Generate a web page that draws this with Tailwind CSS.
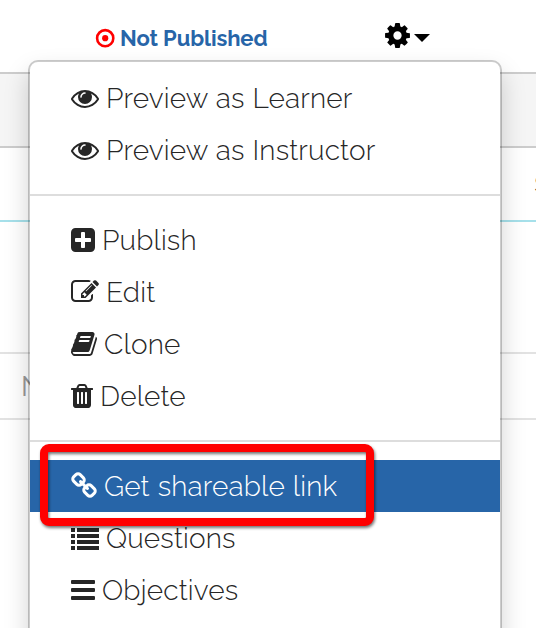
<!DOCTYPE html>
<html lang="en">
<head>
    <meta charset="UTF-8">
    <meta name="viewport" content="width=device-width, initial-scale=1.0">
    <title>Module menu</title>
    <script src="https://cdn.jsdelivr.net/npm/@tailwindcss/browser@4"></script>
</head>
<body class="relative w-[536px] h-[628px] overflow-hidden bg-white font-[Raleway,Lato,sans-serif] text-[#262626]">

    <!-- Page behind the menu -->
    <header class="flex items-center h-[72px] pt-1 pl-[95px]">
        <svg class="w-5 h-5 shrink-0" viewBox="0 0 20 20">
            <circle cx="10.2" cy="10.2" r="8.1" fill="none" stroke="#f00" stroke-width="2.6"/>
            <circle cx="10.2" cy="10.2" r="3.1" fill="#f00"/>
        </svg>
        <span class="w-[270px] pl-[5px] text-[22px] leading-7 font-bold tracking-[-0.1px] text-[#2765a8]">Not Published</span>
        <svg class="w-[29px] h-[29px] -mt-[5px] -ml-[2px] shrink-0" viewBox="0 0 1792 1792" fill="#000"><path d="M1152 896q0-106-75-181t-181-75-181 75-75 181 75 181 181 75 181-75 75-181zm512-109v222q0 12-8 23t-20 13l-185 28q-19 54-39 91 35 50 107 138 10 12 10 25t-9 23q-27 37-99 108t-94 71q-12 0-26-9l-138-108q-44 23-91 38-16 136-29 186-7 28-36 28h-222q-14 0-24.5-8.5t-11.5-21.5l-28-184q-49-16-90-37l-141 107q-10 9-25 9-14 0-25-11-126-114-165-168-7-10-7-23 0-12 8-23 15-21 51-66.5t54-70.5q-27-50-41-99l-183-27q-13-2-21-12.5t-8-23.5v-222q0-12 8-23t19-13l186-28q14-46 39-92-40-57-107-138-10-12-10-24 0-10 9-23 26-36 98.5-107.5t94.5-71.5q13 0 26 10l138 107q44-23 91-38 16-136 29-186 7-28 36-28h222q14 0 24.5 8.5t11.5 21.5l28 184q49 16 90 37l142-107q9-9 24-9 13 0 25 10 129 119 165 170 7 8 7 22 0 12-8 23-15 21-51 66.5t-54 70.5q26 50 41 98l183 28q13 2 21 12.5t8 23.5z"/></svg>
        <svg class="w-4 h-2 ml-[2px] -mt-[1px] shrink-0" viewBox="0 0 16 8" fill="#000"><path d="M0 0h16l-8 8z"/></svg>
    </header>
    <div class="h-[76px] bg-[#f5f5f5] border-y-2 border-[#ccc]"></div>
    <div class="h-[74px] border-b-2 border-[#a6e0ea] pt-[18px] pl-[534.5px] text-[22px] leading-9 font-normal whitespace-nowrap">S</div>
    <div class="h-[132px] border-b-2 border-[#e2e2e2]"></div>
    <div class="h-[66px] border-b-2 border-[#e2e2e2] pl-[21px] pt-px text-[28px] leading-[64px] font-normal text-[#999]">Name</div>

    <!-- Dropdown menu -->
    <div class="absolute left-[28px] top-[60px] w-[474px] h-[640px] pt-[10px] rounded-[10px] bg-white border-2 border-black/20 bg-clip-padding shadow-[0_12px_24px_rgba(0,0,0,0.175)] text-[28px] leading-[52px] font-light tracking-[0.17px] [word-spacing:0.6px] whitespace-nowrap">
        <a class="flex items-center h-[52px] pl-[41px] gap-[7px]">
            <svg class="w-7 h-7" viewBox="0 0 1792 1792" fill="currentColor"><path d="M1664 960q-152-236-381-353 61 104 61 225 0 185-131.5 316.5t-316.5 131.5-316.5-131.5-131.5-316.5q0-121 61-225-229 117-381 353 133 205 333.5 326.5t434.5 121.5 434.5-121.5 333.5-326.5zm-720-384q0-20-14-34t-34-14q-125 0-214.5 89.5t-89.5 214.5q0 20 14 34t34 14 34-14 14-34q0-86 61-147t147-61q20 0 34-14t14-34zm848 384q0 34-20 69-140 230-376.5 368.5t-499.5 138.5-499.5-139-376.5-368q-20-35-20-69t20-69q140-229 376.5-368t499.5-139 499.5 139 376.5 368q20 35 20 69z"/></svg>
            <span class="pt-[2px]">Preview as Learner</span>
        </a>
        <a class="flex items-center h-[52px] pl-[41px] gap-[7px]">
            <svg class="w-7 h-7" viewBox="0 0 1792 1792" fill="currentColor"><path d="M1664 960q-152-236-381-353 61 104 61 225 0 185-131.5 316.5t-316.5 131.5-316.5-131.5-131.5-316.5q0-121 61-225-229 117-381 353 133 205 333.5 326.5t434.5 121.5 434.5-121.5 333.5-326.5zm-720-384q0-20-14-34t-34-14q-125 0-214.5 89.5t-89.5 214.5q0 20 14 34t34 14 34-14 14-34q0-86 61-147t147-61q20 0 34-14t14-34zm848 384q0 34-20 69-140 230-376.5 368.5t-499.5 138.5-499.5-139-376.5-368q-20-35-20-69t20-69q140-229 376.5-368t499.5-139 499.5 139 376.5 368q20 35 20 69z"/></svg>
            <span class="pt-[2px]">Preview as Instructor</span>
        </a>
        <div class="h-[2px] my-[18px] bg-[#ddd]"></div>
        <a class="flex items-center h-[52px] pl-[41px] gap-[7px]">
            <svg class="w-6 h-7" viewBox="128 0 1536 1792" fill="currentColor"><path d="M1408 960v-128q0-26-19-45t-45-19h-320v-320q0-26-19-45t-45-19h-128q-26 0-45 19t-19 45v320h-320q-26 0-45 19t-19 45v128q0 26 19 45t45 19h320v320q0 26 19 45t45 19h128q26 0 45-19t19-45v-320h320q26 0 45-19t19-45zm256-544v960q0 119-84.5 203.5t-203.5 84.5h-960q-119 0-203.5-84.5t-84.5-203.5v-960q0-119 84.5-203.5t203.5-84.5h960q119 0 203.5 84.5t84.5 203.5z"/></svg>
            <span class="pt-[2px]">Publish</span>
        </a>
        <a class="flex items-center h-[52px] pl-[41px] gap-[7px]">
            <svg class="w-7 h-7" viewBox="0 0 1792 1792" fill="currentColor"><path d="M888 1184l116-116-152-152-116 116v56h96v96h56zm440-720q-16-16-33 1l-350 350q-17 17-1 33t33-1l350-350q17-17 1-33zm80 594v190q0 119-84.5 203.5t-203.5 84.5h-832q-119 0-203.5-84.5t-84.5-203.5v-832q0-119 84.5-203.5t203.5-84.5h832q63 0 117 25 15 7 18 23 3 17-9 29l-49 49q-14 14-32 8-23-6-45-6h-832q-66 0-113 47t-47 113v832q0 66 47 113t113 47h832q66 0 113-47t47-113v-126q0-13 9-22l64-64q15-15 35-7t20 29zm-96-738l288 288-672 672h-288v-288zm444 132l-92 92-288-288 92-92q28-28 68-28t68 28l152 152q28 28 28 68t-28 68z"/></svg>
            <span class="pt-[2px]">Edit</span>
        </a>
        <a class="flex items-center h-[52px] pl-[41px] gap-[7px]">
            <svg class="w-[26px] h-7" viewBox="64 0 1664 1792" fill="currentColor"><path d="M1703 478q40 57 18 129l-275 906q-19 64-76.5 107.5t-122.5 43.5h-923q-77 0-148.5-53.5t-99.5-131.5q-24-67-2-127 0-4 3-27t4-37q1-8-3-21.5t-3-19.5q2-11 8-21t16.5-23.5 16.5-23.5q23-38 45-91.5t30-91.5q3-10 .5-30t-.5-28q3-11 17-28t17-23q21-36 42-92t25-90q1-9-2.5-32t.5-28q4-13 22-30.5t22-22.5q19-26 42.5-84.5t27.5-96.5q1-8-3-25.5t-2-26.5q2-8 9-18t18-23 17-21q8-12 16.5-30.5t15-35 16-36 19.5-32 26.5-23.5 36-11.5 47.5 5.5l-1 3q38-9 51-9h761q74 0 114 56t18 130l-274 906q-36 119-71.5 153.5t-128.5 34.5h-869q-27 0-38 15-11 16-1 43 24 70 144 70h923q29 0 56-15.5t35-41.5l300-987q7-22 5-57 38 15 59 43zm-1064 2q-4 13 2 22.5t20 9.5h608q13 0 25.5-9.5t16.5-22.5l21-64q4-13-2-22.5t-20-9.5h-608q-13 0-25.5 9.5t-16.5 22.5zm-83 256q-4 13 2 22.5t20 9.5h608q13 0 25.5-9.5t16.5-22.5l21-64q4-13-2-22.5t-20-9.5h-608q-13 0-25.5 9.5t-16.5 22.5z"/></svg>
            <span class="pt-[2px]">Clone</span>
        </a>
        <a class="flex items-center h-[52px] pl-[41px] gap-[7px]">
            <svg class="w-[22px] h-7" viewBox="192 0 1408 1792" fill="currentColor"><path d="M704 1376v-704q0-14-9-23t-23-9h-64q-14 0-23 9t-9 23v704q0 14 9 23t23 9h64q14 0 23-9t9-23zm256 0v-704q0-14-9-23t-23-9h-64q-14 0-23 9t-9 23v704q0 14 9 23t23 9h64q14 0 23-9t9-23zm256 0v-704q0-14-9-23t-23-9h-64q-14 0-23 9t-9 23v704q0 14 9 23t23 9h64q14 0 23-9t9-23zm-544-992h448l-48-117q-7-9-17-11h-317q-10 2-17 11zm928 32v64q0 14-9 23t-23 9h-96v948q0 83-47 143.5t-113 60.5h-832q-66 0-113-58.5t-47-141.5v-952h-96q-14 0-23-9t-9-23v-64q0-14 9-23t23-9h309l70-167q15-37 54-63t79-26h320q40 0 79 26t54 63l70 167h309q14 0 23 9t9 23z"/></svg>
            <span class="pt-[2px]">Delete</span>
        </a>
        <div class="h-[2px] my-[18px] bg-[#ddd]"></div>
        <a class="flex items-center h-[52px] pl-[41px] gap-[7px] bg-[#2765a8] text-white">
            <svg class="w-[26px] h-7" viewBox="64 0 1664 1792" fill="currentColor"><path d="M1520 1216q0-40-28-68l-208-208q-28-28-68-28-42 0-72 32 3 3 19 18.5t21.5 21.5 15 19 13 25.5 3.5 27.5q0 40-28 68t-68 28q-15 0-27.5-3.5t-25.5-13-19-15-21.5-21.5-18.5-19q-33 31-33 73 0 40 28 68l206 207q27 27 68 27 40 0 68-26l147-146q28-28 28-67zm-703-705q0-40-28-68l-206-207q-28-28-68-28-39 0-68 27l-147 146q-28 28-28 67 0 40 28 68l208 208q27 27 68 27 42 0 72-31-3-3-19-18.5t-21.5-21.5-15-19-13-25.5-3.5-27.5q0-40 28-68t68-28q15 0 27.5 3.5t25.5 13 19 15 21.5 21.5 18.5 19q33-31 33-73zm895 705q0 120-85 203l-147 146q-83 83-203 83-121 0-204-85l-206-207q-83-83-83-203 0-123 88-209l-88-88q-86 88-208 88-120 0-204-84l-208-208q-84-84-84-204t85-203l147-146q83-83 203-83 121 0 204 85l206 207q83 83 83 203 0 123-88 209l88 88q86-88 208-88 120 0 204 84l208 208q84 84 84 204z"/></svg>
            <span class="pt-[2px]">Get shareable link</span>
        </a>
        <a class="flex items-center h-[52px] pl-[41px] gap-[7px]">
            <svg class="w-7 h-7" viewBox="0 0 28 28" fill="currentColor">
                <path d="M0 4h4v4H0zM0 10h4v4H0zM0 16h4v4H0zM0 22h4v4H0zM6 4h22v4H6zM6 10h22v4H6zM6 16h22v4H6zM6 22h22v4H6z"/>
            </svg>
            <span class="pt-[2px]">Questions</span>
        </a>
        <a class="flex items-center h-[52px] pl-[41px] gap-[7px]">
            <svg class="w-6 h-7" viewBox="0 0 24 28" fill="currentColor">
                <rect y="4" width="24" height="4" rx="1"/>
                <rect y="12" width="24" height="4" rx="1"/>
                <rect y="20" width="24" height="4" rx="1"/>
            </svg>
            <span class="pt-[2px]">Objectives</span>
        </a>
    </div>

    <!-- Highlight box -->
    <div class="absolute left-[40px] top-[444px] w-[334px] h-[82px] rounded-[9px] border-8 border-[#f00] drop-shadow-[1px_2px_1.5px_rgba(0,0,0,0.55)]"></div>
</body>
</html>
